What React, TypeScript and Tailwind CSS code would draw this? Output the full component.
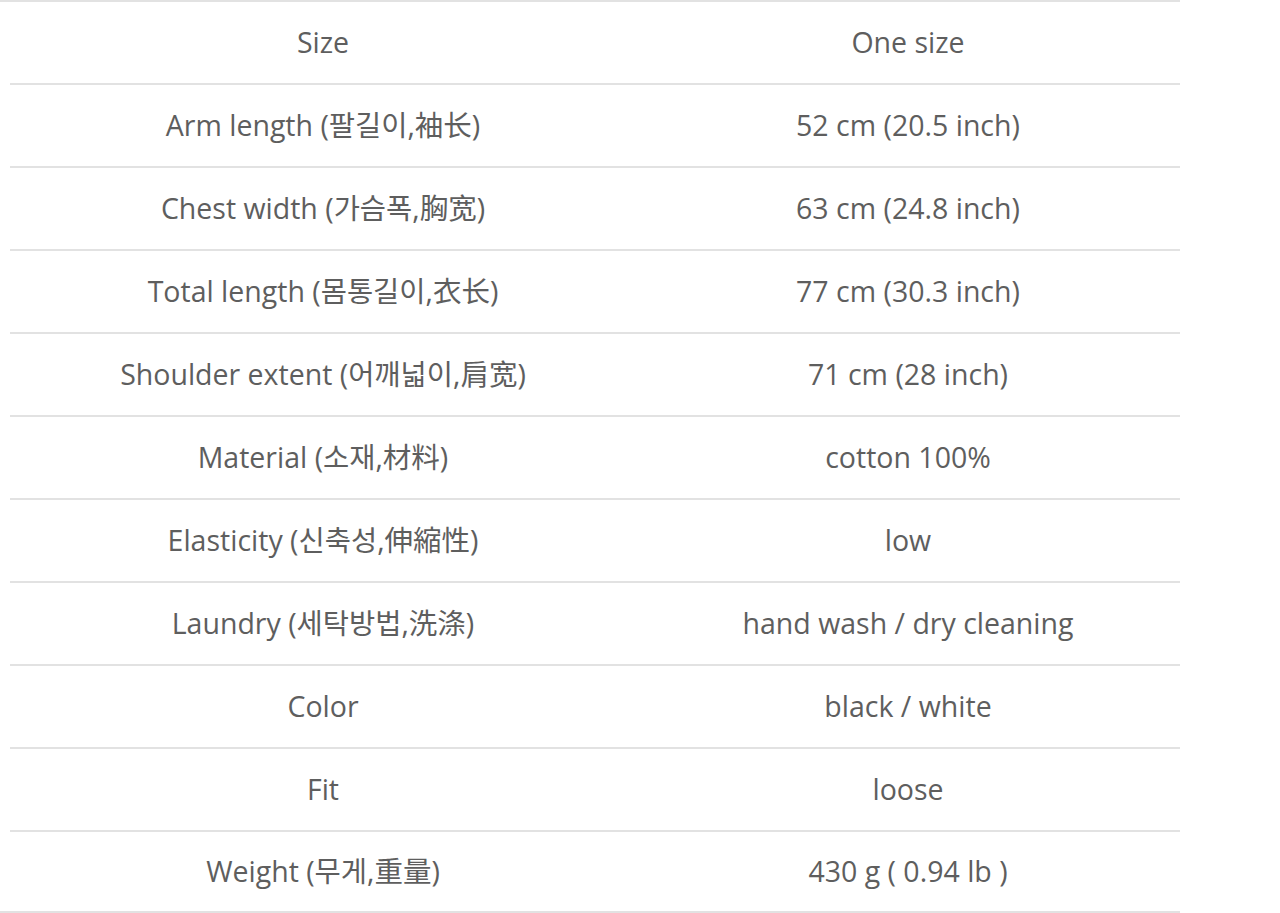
const rows = [
  ['Size', 'One size'],
  ['Arm length (팔길이,袖长)', '52 cm (20.5 inch)'],
  ['Chest width (가슴폭,胸宽)', '63 cm (24.8 inch)'],
  ['Total length (몸통길이,衣长)', '77 cm (30.3 inch)'],
  ['Shoulder extent (어깨넓이,肩宽)', '71 cm (28 inch)'],
  ['Material (소재,材料)', 'cotton 100%'],
  ['Elasticity (신축성,伸縮性)', 'low'],
  ['Laundry (세탁방법,洗涤)', 'hand wash / dry cleaning'],
  ['Color', 'black / white'],
  ['Fit', 'loose'],
  ['Weight (무게,重量)', '430 g ( 0.94 lb )'],
];

export default function App() {
  return (
    <div className="w-[1280px] h-[913px] bg-white overflow-hidden">
      <div
        className="w-[1180px] border-t-2 border-b-2 border-[#e2e2e2] text-[#5e5e5e] text-[28.5px]"
        style={{ fontFamily: '"Open Sans", "Noto Sans CJK KR", sans-serif' }}
      >
        {rows.map((row, idx) => (
          <div
            key={idx}
            className={
              'ml-[10px] grid grid-cols-[626px_1fr] items-center ' +
              (idx < rows.length - 1 ? 'h-[83px] border-b-2 border-[#e2e2e2]' : 'h-[79px]')
            }
          >
            <div className="text-center">{row[0]}</div>
            <div className="text-center">{row[1]}</div>
          </div>
        ))}
      </div>
    </div>
  );
}
